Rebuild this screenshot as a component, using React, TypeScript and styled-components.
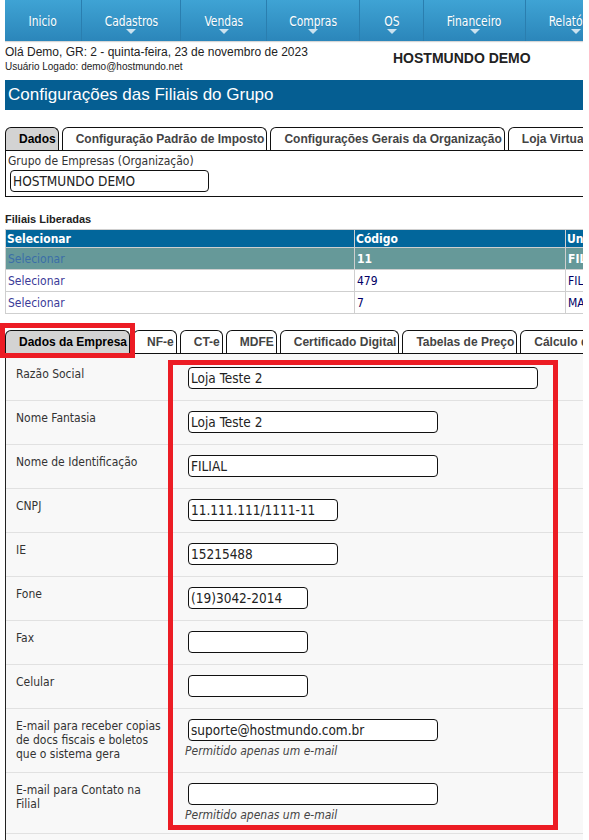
import React from 'react';
import styled, { createGlobalStyle } from 'styled-components';

const GlobalStyle = createGlobalStyle`
  html, body {
    margin: 0;
    overflow: hidden;
    background: #fff;
    font-family: "Liberation Sans", Arial, sans-serif;
  }
`;

const TAHOMA = `"DejaVu Sans Condensed", "DejaVu Sans", sans-serif`;

const Screen = styled.div`
  position: relative;
  width: 589px;
  height: 840px;
  overflow: hidden;
`;

const Page = styled.div`
  margin-left: 5px;
  width: 578px;
  height: 840px;
  overflow: hidden;
`;

const NavBar = styled.nav`
  display: flex;
  height: 41px;
  background: linear-gradient(#3fa3d4, #2b86ba);
  box-shadow: 0 1px 1px #d6d6d6;
  white-space: nowrap;
`;

const NavItem = styled.div<{ $w: number; $menu?: boolean }>`
  position: relative;
  flex: none;
  box-sizing: border-box;
  width: ${p => p.$w}px;
  text-align: center;
  line-height: 41px;
  & + & {
    border-left: 1px solid #2a7eaf;
  }
  &::after {
    content: '';
    display: ${p => (p.$menu ? 'block' : 'none')};
    position: absolute;
    left: 50%;
    bottom: 7px;
    margin-left: -5px;
    border-left: 5px solid transparent;
    border-right: 5px solid transparent;
    border-top: 5px solid rgba(255, 255, 255, 0.75);
  }
`;

const NavText = styled.span`
  display: inline-block;
  transform: scaleX(0.85);
  font-family: "DejaVu Sans Condensed", "DejaVu Sans", sans-serif;
  font-size: 14px;
  color: #fff;
  text-shadow: 0 1px 0 rgba(0, 0, 0, 0.15);
`;

const InfoBar = styled.div`
  display: flex;
  box-sizing: border-box;
  height: 39px;
  padding-top: 4px;
`;

const Greeting = styled.div`
  width: 388px;
  color: #222;
`;

const GreetingLine = styled.div`
  font-size: 12px;
  line-height: 15px;
`;

const UserLine = styled.div`
  font-size: 10px;
  line-height: 13px;
`;

const Brand = styled.div`
  margin-top: 6px;
  font-size: 14px;
  line-height: 14px;
  font-weight: bold;
  color: #222;
`;

const TitleBar = styled.h1`
  margin: 0;
  height: 30px;
  padding-left: 3px;
  background: #055e92;
  color: #fff;
  font-size: 17px;
  font-weight: normal;
  line-height: 30px;
  white-space: nowrap;
`;

const TabStrip = styled.div<{ $gap: number }>`
  display: flex;
  gap: 3px;
  margin-top: ${p => p.$gap}px;
  border-bottom: 1px solid #111;
  white-space: nowrap;
`;

const Tab = styled.div<{ $active?: boolean }>`
  flex: none;
  box-sizing: border-box;
  height: 23px;
  padding: 0 2px 0 13px;
  border: 1px solid #111;
  border-bottom: none;
  border-radius: 6px 6px 0 0;
  background: ${p => (p.$active ? '#d3d3d3' : '#fff')};
  color: ${p => (p.$active ? '#000' : '#444')};
  font-size: 12px;
  font-weight: bold;
  line-height: 22px;
`;

const GroupPanel = styled.div`
  padding: 3px 2px 4px;
  border-left: 1px solid #111;
  border-bottom: 1px solid #111;
`;

const FieldLabel = styled.div`
  font-family: ${TAHOMA};
  font-size: 12px;
  line-height: 14px;
  color: #333;
`;

const TextBox = styled.input<{ $w: number }>`
  display: block;
  box-sizing: border-box;
  width: ${p => p.$w}px;
  height: 22px;
  margin: 0;
  padding: 0 2px;
  border: 1px solid #111;
  border-radius: 4px;
  background: #fff;
  font-family: ${TAHOMA};
  font-size: 13.5px;
  color: #222;
  outline: none;
`;

const GroupInput = styled(TextBox)`
  margin: 2px 0 0 2px;
`;

const SectionTitle = styled.div`
  margin-top: 15px;
  font-size: 11px;
  line-height: 14px;
  font-weight: bold;
  color: #222;
`;

const Grid = styled.table`
  margin-top: 3px;
  width: 720px;
  table-layout: fixed;
  border-collapse: collapse;
  font-family: ${TAHOMA};
  font-size: 12px;
`;

const HeadCell = styled.th`
  height: 17px;
  padding: 0 1px;
  border: 1px solid #cfcfcf;
  background: #02669b;
  color: #fff;
  text-align: left;
  font-weight: bold;
`;

const Row = styled.tr<{ $selected?: boolean }>`
  background: ${p => (p.$selected ? '#669999' : '#fff')};
`;

const Cell = styled.td<{ $tone: 'link' | 'selLink' | 'value' | 'selValue' }>`
  height: 21px;
  padding: 0 2px;
  border: 1px solid #cfcfcf;
  white-space: nowrap;
  overflow: hidden;
  color: ${p =>
    ({ link: '#3b3b98', selLink: '#3b6ea8', value: '#000066', selValue: '#fff' })[p.$tone]};
  font-weight: ${p => (p.$tone === 'selValue' ? 'bold' : 'normal')};
`;

const Form = styled.div`
  padding-top: 3px;
  border-left: 1px solid #222;
  background: #f8f8f8;
`;

const FormRow = styled.div`
  display: grid;
  grid-template-columns: 176px 1fr;
  border-bottom: 1px solid #e1e1e1;
`;

const RowLabel = styled.div`
  padding: 10px 6px 11px 10px;
  font-family: ${TAHOMA};
  font-size: 12px;
  line-height: 14px;
  color: #333;
`;

const RowValue = styled.div`
  padding: 10px 0 11px 6px;
`;

const Hint = styled.div`
  margin: 4px 0 0 -3px;
  font-family: ${TAHOMA};
  font-size: 12px;
  font-style: italic;
  line-height: 13px;
  color: #444;
`;

const Mark = styled.div`
  position: absolute;
  box-sizing: border-box;
  border: 5px solid #ec1c24;
  pointer-events: none;
`;

const TabMark = styled(Mark)`
  left: 0;
  top: 323px;
  width: 135px;
  height: 35px;
`;

const FieldsMark = styled(Mark)`
  left: 168px;
  top: 360px;
  width: 390px;
  height: 470px;
`;

const menu = [
  { label: 'Inicio', width: 76 },
  { label: 'Cadastros', width: 99 },
  { label: 'Vendas', width: 86 },
  { label: 'Compras', width: 93 },
  { label: 'OS', width: 64 },
  { label: 'Financeiro', width: 102 },
  { label: 'Relatórios', width: 100 },
];
const groupTabs = ['Dados', 'Configuração Padrão de Imposto', 'Configurações Gerais da Organização', 'Loja Virtual'];
const companyTabs = ['Dados da Empresa', 'NF-e', 'CT-e', 'MDFE', 'Certificado Digital', 'Tabelas de Preço', 'Cálculo de Frete'];

const branches = [
  { code: '11', unit: 'FILIAL', selected: true },
  { code: '479', unit: 'FILIAL 2' },
  { code: '7', unit: 'MATRIZ' },
];

interface Field {
  label: React.ReactNode;
  value: string;
  width: number;
  hint?: boolean;
}

const fields: Field[] = [
  { label: 'Razão Social', value: 'Loja Teste 2', width: 350 },
  { label: 'Nome Fantasia', value: 'Loja Teste 2', width: 250 },
  { label: 'Nome de Identificação', value: 'FILIAL', width: 250 },
  { label: 'CNPJ', value: '11.111.111/1111-11', width: 150 },
  { label: 'IE', value: '15215488', width: 150 },
  { label: 'Fone', value: '(19)3042-2014', width: 120 },
  { label: 'Fax', value: '', width: 120 },
  { label: 'Celular', value: '', width: 120 },
  {
    label: <>E-mail para receber copias<br />de docs fiscais e boletos<br />que o sistema gera</>,
    value: 'suporte@hostmundo.com.br',
    width: 250,
    hint: true,
  },
  { label: <>E-mail para Contato na<br />Filial</>, value: '', width: 250, hint: true },
];

const App: React.FC = () => (
  <Screen>
    <GlobalStyle />
    <Page>
      <NavBar>
        {menu.map((item, i) => (
          <NavItem key={item.label} $w={item.width} $menu={i > 0}>
            <NavText>{item.label}</NavText>
          </NavItem>
        ))}
      </NavBar>

      <InfoBar>
        <Greeting>
          <GreetingLine>Olá Demo, GR: 2 - quinta-feira, 23 de novembro de 2023</GreetingLine>
          <UserLine>Usuário Logado: demo@hostmundo.net</UserLine>
        </Greeting>
        <Brand>HOSTMUNDO DEMO</Brand>
      </InfoBar>

      <TitleBar>Configurações das Filiais do Grupo</TitleBar>

      <TabStrip $gap={17}>
        {groupTabs.map((t, i) => <Tab key={t} $active={i === 0}>{t}</Tab>)}
      </TabStrip>
      <GroupPanel>
        <FieldLabel>Grupo de Empresas (Organização)</FieldLabel>
        <GroupInput $w={199} value="HOSTMUNDO DEMO" readOnly />
      </GroupPanel>

      <SectionTitle>Filiais Liberadas</SectionTitle>
      <Grid>
        <colgroup>
          <col style={{ width: 349 }} />
          <col style={{ width: 211 }} />
          <col style={{ width: 160 }} />
        </colgroup>
        <thead>
          <tr>
            <HeadCell>Selecionar</HeadCell>
            <HeadCell>Código</HeadCell>
            <HeadCell>Unidade</HeadCell>
          </tr>
        </thead>
        <tbody>
          {branches.map(b => (
            <Row key={b.code} $selected={b.selected}>
              <Cell $tone={b.selected ? 'selLink' : 'link'}>Selecionar</Cell>
              <Cell $tone={b.selected ? 'selValue' : 'value'}>{b.code}</Cell>
              <Cell $tone={b.selected ? 'selValue' : 'value'}>{b.unit}</Cell>
            </Row>
          ))}
        </tbody>
      </Grid>

      <TabStrip $gap={16}>
        {companyTabs.map((t, i) => <Tab key={t} $active={i === 0}>{t}</Tab>)}
      </TabStrip>
      <Form>
        {fields.map((f, i) => (
          <FormRow key={i}>
            <RowLabel>{f.label}</RowLabel>
            <RowValue>
              <TextBox $w={f.width} value={f.value} readOnly />
              {f.hint && <Hint>Permitido apenas um e-mail</Hint>}
            </RowValue>
          </FormRow>
        ))}
        <FormRow>
          <RowLabel>&nbsp;</RowLabel>
          <RowValue />
        </FormRow>
      </Form>
    </Page>
    <TabMark />
    <FieldsMark />
  </Screen>
);

export default App;
